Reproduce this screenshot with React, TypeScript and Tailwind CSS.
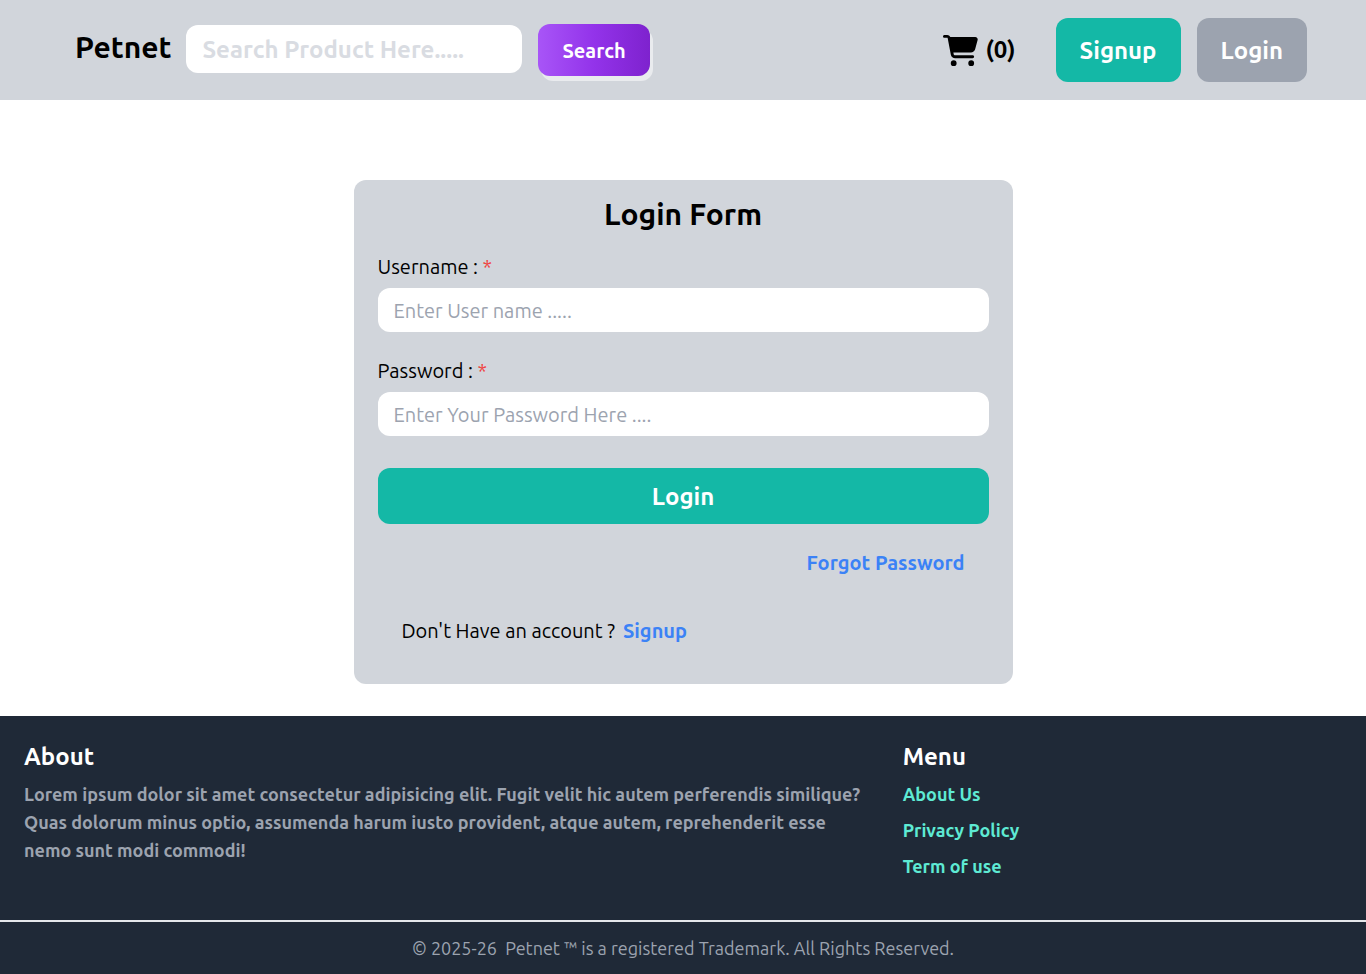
import type { InputHTMLAttributes } from "react";
import { FaCartShopping } from "react-icons/fa6";

function Header() {
  return (
    <header className="flex min-h-[100px] items-center justify-between bg-[#d1d5db] pr-[59px] pl-[75px]">
      <div className="flex items-center">
        <a href="#home" className="mr-[15px] pb-1.5 text-3xl font-semibold text-black">
          Petnet
        </a>
        <form role="search" className="flex items-center gap-4" onSubmit={(e) => e.preventDefault()}>
          <input
            type="text"
            aria-label="Search products"
            placeholder="Search Product Here....."
            className="mb-0.5 h-12 w-[336px] rounded-xl bg-white px-4 text-2xl font-semibold text-[#374151] outline-none placeholder:text-[#d9dce2]"
          />
          <button
            type="submit"
            className="rounded-xl bg-linear-to-r/srgb from-[#a855f7] via-[#9333ea] to-[#7e22ce] px-6 pt-[13px] pb-[11px] text-xl font-semibold text-white shadow-[3px_5px_0_#e9ebee]"
          >
            Search
          </button>
        </form>
      </div>
      <div className="flex items-center gap-10">
        <a href="#cart" aria-label="Cart" className="flex items-center gap-[7px] text-2xl font-semibold text-black">
          <FaCartShopping className="size-[35px]" />
          <span>(0)</span>
        </a>
        <div className="flex gap-4">
          <button type="button" className="rounded-xl bg-[#14b8a6] px-6 pt-[17px] pb-[15px] text-2xl font-semibold text-white">
            Signup
          </button>
          <button type="button" className="rounded-xl bg-[#9ca3af] px-6 pt-[17px] pb-[15px] text-2xl font-semibold text-white">
            Login
          </button>
        </div>
      </div>
    </header>
  );
}

type FieldProps = { id: string; label: string } & InputHTMLAttributes<HTMLInputElement>;

function Field({ id, label, ...props }: FieldProps) {
  return (
    <div className="flex flex-col gap-[7px]">
      <label htmlFor={id} className="text-xl">
        {label} : <span className="text-[#ef4444]">*</span>
      </label>
      <input
        id={id}
        className="h-11 w-full rounded-xl bg-white px-4 text-xl outline-none placeholder:text-[#9ca3af]"
        {...props}
      />
    </div>
  );
}

function LoginCard() {
  return (
    <section className="w-full max-w-[659px] rounded-xl bg-[#d1d5db] px-6 pt-4 pb-[39px] text-black">
      <h1 className="mb-[21px] text-center text-3xl font-semibold">Login Form</h1>
      <form className="flex flex-col gap-[25px]" onSubmit={(e) => e.preventDefault()}>
        <Field id="username" label="Username" type="text" placeholder="Enter User name ....." />
        <Field id="password" label="Password" type="password" placeholder="Enter Your Password Here ...." />
        <button
          type="submit"
          className="mt-[7px] rounded-xl bg-[#14b8a6] pt-[13px] pb-[11px] text-2xl font-semibold text-white"
        >
          Login
        </button>
      </form>
      <div className="mt-[25px] flex flex-col gap-10 px-6 text-xl">
        <a href="#forgot" className="self-end font-semibold text-[#3b82f6]">
          Forgot Password
        </a>
        <p className="flex gap-2">
          Don't Have an account ?
          <a href="#signup" className="font-semibold text-[#3b82f6]">
            Signup
          </a>
        </p>
      </div>
    </section>
  );
}

const menu = ["About Us", "Privacy Policy", "Term of use"];

function Footer() {
  return (
    <footer className="bg-[#1f2937]">
      <div className="grid grid-cols-3 px-6 pt-[25px] pb-10">
        <section className="col-span-2 pr-8">
          <h2 className="mb-[7px] text-2xl font-semibold text-white">About</h2>
          <p className="text-lg font-semibold text-[#9ca3af]">
            Lorem ipsum dolor sit amet consectetur adipisicing elit. Fugit velit hic autem perferendis similique? Quas
            dolorum minus optio, assumenda harum iusto provident, atque autem, reprehenderit esse nemo sunt modi
            commodi!
          </p>
        </section>
        <nav aria-labelledby="menu-title">
          <h2 id="menu-title" className="mb-[7px] text-2xl font-semibold text-white">
            Menu
          </h2>
          <ul className="flex flex-col gap-2 text-lg font-semibold text-[#5eead4]">
            {menu.map((item) => (
              <li key={item}>
                <a href="#menu">{item}</a>
              </li>
            ))}
          </ul>
        </nav>
      </div>
      <p className="border-t-2 border-[#e5e7eb] py-3 text-center text-lg text-[#9ca3af]">
        © 2025-26 &nbsp;Petnet ™ is a registered Trademark. All Rights Reserved.
      </p>
    </footer>
  );
}

export default function App() {
  return (
    <div className="flex min-h-screen flex-col bg-white font-['Ubuntu','Noto_Sans',sans-serif]">
      <Header />
      <main className="flex grow justify-center pt-20 pb-8">
        <LoginCard />
      </main>
      <Footer />
    </div>
  );
}
